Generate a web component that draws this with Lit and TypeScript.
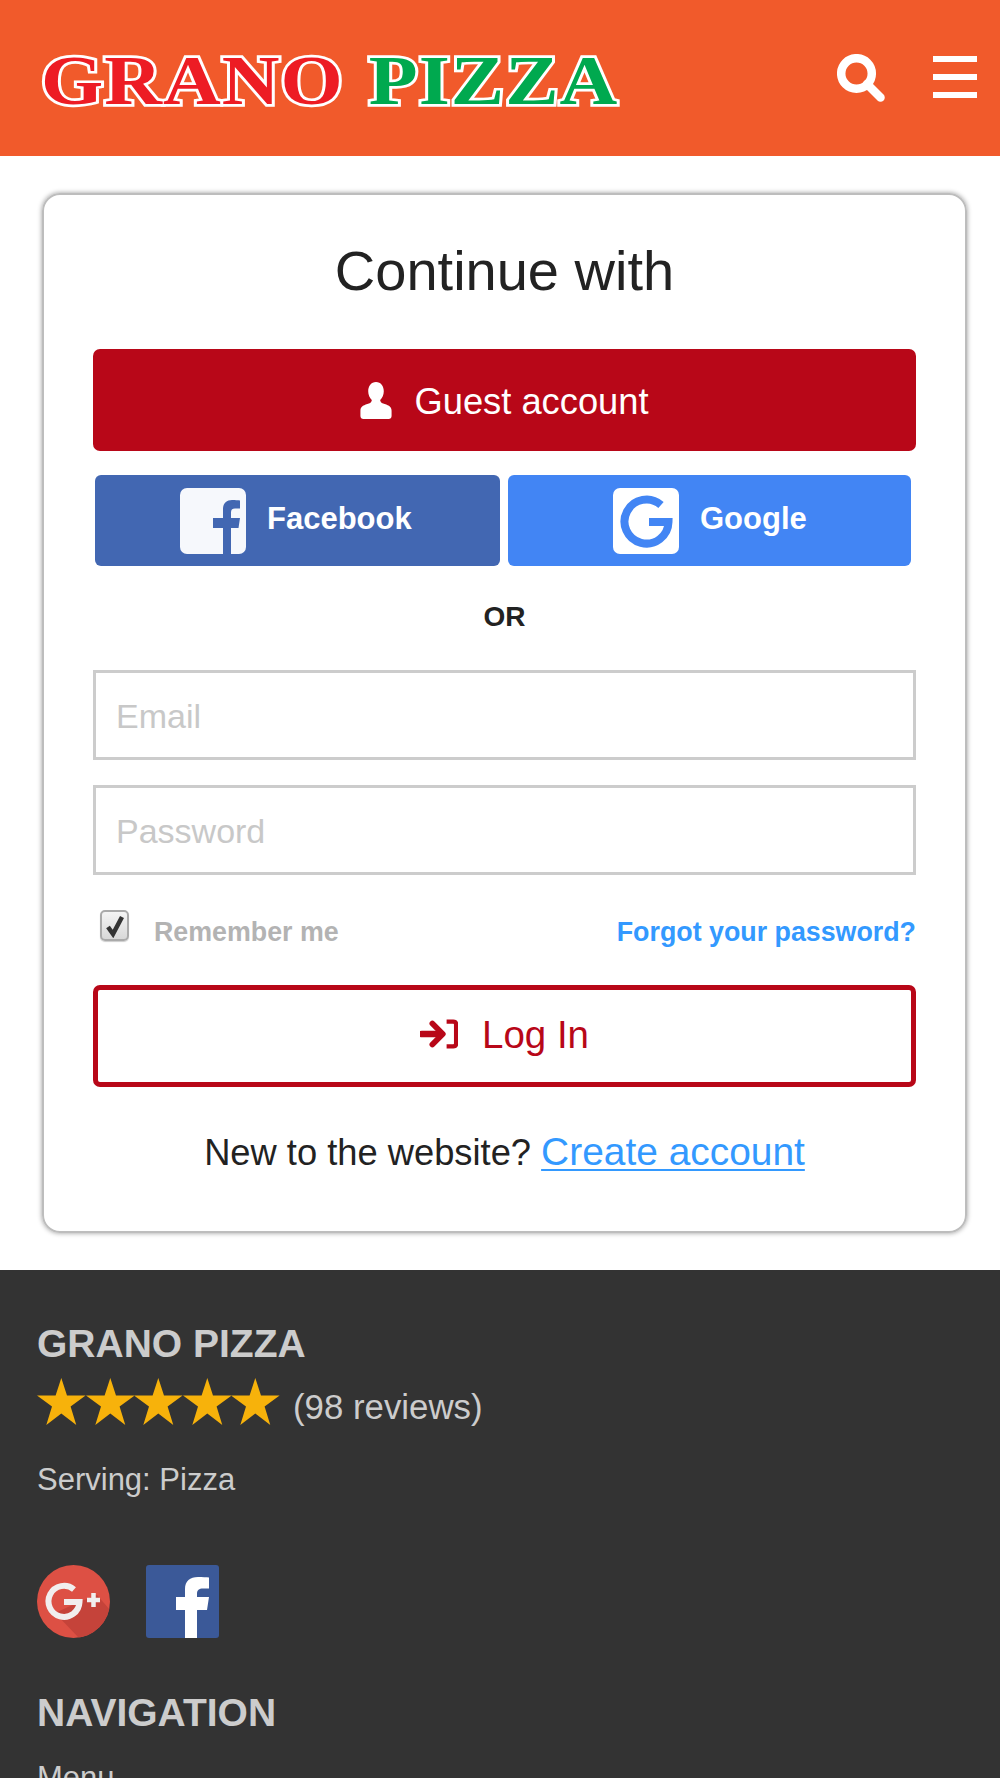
import { LitElement, html, css, svg } from "lit";
import { customElement } from "lit/decorators.js";

const starPath = "M24.3 0 L30 17.5 L48.6 17.5 L33.6 28.5 L39.3 47 L24.3 35.5 L9.3 47 L15 28.5 L0 17.5 L18.6 17.5 Z";

@customElement("app-root")
export class AppRoot extends LitElement {
  static styles = css`
    :host { display: block; width: 1000px; height: 1778px; overflow: hidden; font-family: "Liberation Sans", Arial, sans-serif; background: #fff; color: #222; }
    * { box-sizing: border-box; }
    .header { height: 156px; background: #f15a2b; display: flex; align-items: center; padding: 0 23px 0 41px; }
    .logo { flex: 1; font-family: "Liberation Serif", serif; font-weight: 700; font-size: 80px; line-height: 80px; white-space: pre; letter-spacing: 1px; margin-top: 4px; paint-order: stroke fill; -webkit-text-stroke: 6px #fff; transform: scale(1, .88); transform-origin: 0 50%; }
    .logo .r { color: #ed1c24; }
    .logo .g { color: #00a94f; margin-left: 4px; }
    .search { width: 48px; height: 48px; margin: -1px 48px 0 0; display: block; }
    .burger { width: 44px; display: flex; flex-direction: column; gap: 12.5px; margin-top: -2px; }
    .burger i { display: block; height: 5.5px; background: #fff; }
    main { padding: 37px 33px 37px 42px; }
    .card { height: 1040px; border: 2px solid #bdbdbd; border-radius: 18px; box-shadow: 0 0 5px rgba(0,0,0,.4); padding: 0 49px; display: flex; flex-direction: column; }
    h1 { margin: 42px 0 0; height: 68px; font-size: 56px; line-height: 68px; font-weight: 400; text-align: center; color: #222; }
    .guest { margin-top: 44px; height: 102px; border-radius: 7px; background: #b80718; color: #fff; display: flex; align-items: center; justify-content: center; gap: 22px; font-size: 36.3px; }
    .guest svg { width: 32px; height: 37px; fill: #fff; margin-top: 1px; }
    .guest span { margin-top: 4px; }
    .socials { margin: 24px 5px 0 2px; display: grid; grid-template-columns: 405px 403px; justify-content: space-between; }
    .soc { height: 91px; border-radius: 6px; color: #fff; display: flex; align-items: center; font-weight: 700; font-size: 31px; }
    .soc span { margin-top: -3px; }
    .fb { background: #4267b2; padding-left: 85px; gap: 21px; }
    .gg { background: #4285f4; padding-left: 105px; gap: 21px; }
    .soc svg { width: 66px; height: 66px; display: block; filter: blur(.6px); }
    .or { margin-top: 31px; height: 40px; line-height: 40px; text-align: center; font-weight: 700; font-size: 28px; color: #222; }
    input.field { display: block; width: 100%; height: 90px; border: 3px solid #ccc; padding: 3px 20px 0; margin: 0; font: 400 34px "Liberation Sans", Arial, sans-serif; outline: none; background: #fff; border-radius: 0; }
    input.field::placeholder { color: #c8c8c8; opacity: 1; }
    .email { margin-top: 33px !important; }
    .pw { margin-top: 25px !important; }
    .row { margin-top: 35px; display: flex; align-items: flex-start; height: 75px; font-size: 26.8px; font-weight: 700; }
    .check { width: 29px; height: 31px; margin-left: 7px; border: 2px solid #aaa; border-radius: 5px; background: linear-gradient(#f4f4f4, #d8d8d8); display: flex; align-items: center; justify-content: center; box-shadow: 0 1px 1px rgba(0,0,0,.2); }
    .check svg { width: 20px; height: 24px; }
    .rem { color: #b3b3b3; margin-left: 25px; margin-top: 6px; line-height: 32px; }
    .forgot { color: #3399ff; margin-left: auto; margin-top: 6px; line-height: 32px; text-decoration: none; }
    .login { height: 102px; border: 5px solid #b80718; border-radius: 7px; color: #b80718; display: flex; align-items: center; justify-content: center; gap: 24px; font-size: 38.5px; }
    .login span { margin-top: -2px; }
    .login svg { width: 38px; height: 30px; margin-top: -5px; }
    .new { margin-top: 40px; text-align: center; font-size: 36.3px; line-height: 50px; color: #222; white-space: nowrap; }
    .new a { color: #3399ff; font-size: 38.9px; text-decoration: underline; text-decoration-thickness: 2px; text-underline-offset: 4px; }
    footer { background: #333; color: #ccc; padding: 51px 37px 0; height: 508px; }
    h3 { margin: 0; font-size: 39px; line-height: 46px; font-weight: 700; color: #ccc; }
    .rating { margin-top: 10px; display: flex; align-items: center; height: 48px; font-size: 34.8px; }
    .rating span { margin-top: 12px; }
    .stars { display: flex; width: 243px; margin-right: 13px; }
    .stars svg { width: 48.6px; height: 47px; fill: #f7b20b; display: block; }
    .serving { margin-top: 35px; font-size: 31px; line-height: 40px; }
    .icons { margin-top: 65px; display: flex; gap: 36px; }
    .icons svg { width: 73px; height: 73px; display: block; filter: blur(.5px); }
    .nav { margin-top: 52px; }
    .menu { margin-top: 22px; font-size: 31px; line-height: 40px; }
  `;

  render() {
    return html`
      <div class="header">
        <div class="logo"><span class="r">GRANO</span> <span class="g">PIZZA</span></div>
        <svg class="search" viewBox="0 0 48 48"><circle cx="19.500" cy="19.500" r="15.300" fill="none" stroke="#fff" stroke-width="8.500"/><path d="M30 30l13.500 13.500" stroke="#fff" stroke-width="8.500" stroke-linecap="round" fill="none"/></svg>
        <div class="burger"><i></i><i></i><i></i></div>
      </div>
      <main>
        <div class="card">
          <h1>Continue with</h1>
          <div class="guest">
            <svg viewBox="0 0 32 38"><path d="M16 0c5 0 8 4.200 8 9.500 0 3.600-1.500 7-3.700 9 0 1.600 1 3 3 3.600 4.500 1.400 8.700 2.600 8.700 7.400V35c0 2-1.300 3-3 3H3c-1.700 0-3-1-3-3v-5.500c0-4.800 4.200-6 8.700-7.400 2-.6 3-2 3-3.600-2.200-2-3.700-5.400-3.700-9C8 4.200 11 0 16 0z"/></svg>
            <span>Guest account</span>
          </div>
          <div class="socials">
            <div class="soc fb">
              <svg viewBox="0 0 66 66"><rect width="66" height="66" rx="7" fill="#f6f8fc"/><path d="M43 66V40H33V30h10v-9c0-6 4-9 9-9 3 0 6 .2 8 .5v8h-5c-3 0-4 1.500-4 4V30h9l-1.500 10H51v26z" fill="#4267b2"/></svg>
              <span>Facebook</span>
            </div>
            <div class="soc gg">
              <svg viewBox="0 0 66 66"><rect width="66" height="66" rx="7" fill="#fff"/><path d="M48 17A22 22 0 1 0 55.500 34H36" fill="none" stroke="#4285f4" stroke-width="8"/></svg>
              <span>Google</span>
            </div>
          </div>
          <div class="or">OR</div>
          <input class="field email" type="text" placeholder="Email" />
          <input class="field pw" type="password" placeholder="Password" />
          <div class="row">
            <div class="check"><svg viewBox="0 0 20 24"><path d="M3 13l5 7L17 3" fill="none" stroke="#333" stroke-width="4.500"/></svg></div>
            <span class="rem">Remember me</span>
            <a class="forgot">Forgot your password?</a>
          </div>
          <div class="login">
            <svg viewBox="0 0 40 30"><path d="M2 15h18" stroke="#b80718" stroke-width="7" stroke-linecap="round" fill="none"/><path d="M13 4l11 11-11 11" stroke="#b80718" stroke-width="6" stroke-linecap="round" stroke-linejoin="round" fill="none"/><path d="M28 2h7c2 0 3 1 3 3v20c0 2-1 3-3 3h-7" stroke="#b80718" stroke-width="4.500" fill="none"/></svg>
            <span>Log In</span>
          </div>
          <div class="new">New to the website? <a>Create account</a></div>
        </div>
      </main>
      <footer>
        <h3>GRANO PIZZA</h3>
        <div class="rating">
          <div class="stars">${[0, 1, 2, 3, 4].map(() => html`<svg viewBox="0 0 48.600 47">${svg`<path d=${starPath}/>`}</svg>`)}</div>
          <span>(98 reviews)</span>
        </div>
        <div class="serving">Serving: Pizza</div>
        <div class="icons">
          <svg viewBox="0 0 73 73"><defs><clipPath id="gc"><circle cx="36.500" cy="36.500" r="36.500"/></clipPath></defs><circle cx="36.500" cy="36.500" r="36.500" fill="#dd5044"/><polygon points="18,48 42,37 60,30 73,45 73,73 42,73" fill="#c5433a" clip-path="url(#gc)"/><path d="M37 24.500A15.500 15.500 0 1 0 42.500 37H27" fill="none" stroke="#f1eeee" stroke-width="6"/><path d="M56.500 28v14M50 35h13" stroke="#f1eeee" stroke-width="4.500" fill="none"/></svg>
          <svg viewBox="0 0 73 73"><rect width="73" height="73" rx="3" fill="#3b5998"/><path d="M39 73V45h-9V32h9v-8c0-8 5-12 13-12 4 0 9 .3 11 .5v11h-6c-4 0-6 1.500-6 5V32h12l-2 13H51v28z" fill="#fff"/></svg>
        </div>
        <h3 class="nav">NAVIGATION</h3>
        <div class="menu">Menu</div>
      </footer>
    `;
  }
}
